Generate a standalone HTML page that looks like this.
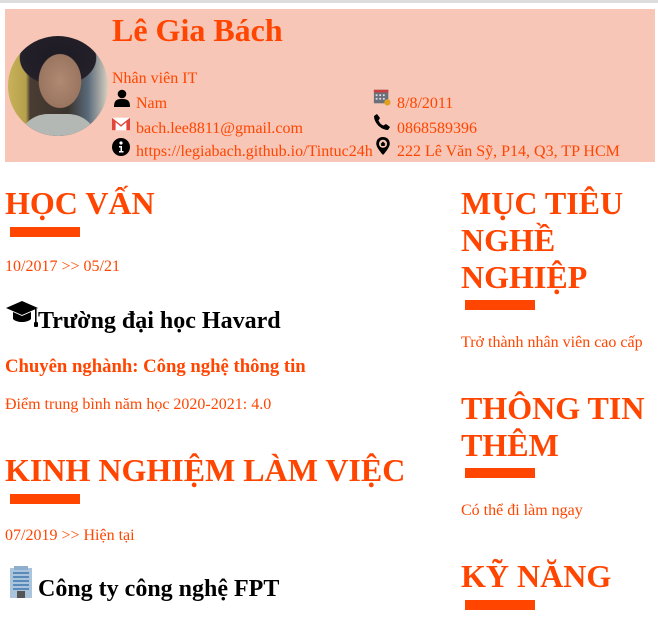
<!DOCTYPE html>
<html><head><meta charset="utf-8"><style>
*{margin:0;padding:0;box-sizing:border-box}
body{width:658px;height:626px;overflow:hidden;background:#fff;font-family:"Liberation Serif",serif;color:#ff4500;position:relative}
.a{position:absolute;white-space:nowrap}
.topline{position:absolute;left:0;top:0;width:658px;height:3px;background:#ddd}
.hdr{position:absolute;left:5px;top:9px;width:650px;height:153px;background:#f8c6b6}
.photo{position:absolute;left:8px;top:36px;width:100px;height:100px;border-radius:50%;overflow:hidden;background:radial-gradient(ellipse 30px 38px at 52% 45%,#b08a72 0%,#9a7560 70%,transparent 72%),radial-gradient(ellipse 42px 30px at 50% 22%,#1c1a22 0%,#24202a 90%,transparent 92%),linear-gradient(90deg,#c8b25a 0%,#b5a04c 18%,#4a3c32 22%,#3a342e 60%,#5a6a7a 80%,#d8d0c0 100%)}
.photo:after{content:"";position:absolute;left:10px;top:78px;width:80px;height:30px;border-radius:40px 40px 0 0;background:#b4b8b4}
.t15{font-size:16px;line-height:18px}
h2{position:absolute;font-size:32px;line-height:37px;font-weight:bold;color:#ff4500;white-space:nowrap}
.bar{position:absolute;width:70px;height:10px;background:#ff4500}
.ic{position:absolute;width:18px;height:18px}
</style></head><body>
<div class="topline"></div>
<div class="hdr"></div>
<div class="photo"></div>
<div class="a" style="left:112px;top:12px;font-size:32px;line-height:36px;font-weight:bold">Lê Gia Bách</div>
<div class="a t15" style="left:112px;top:70px">Nhân viên IT</div>

<svg class="ic" style="left:113px;top:89px" viewBox="0 0 18 18"><circle cx="9" cy="5" r="4.3" fill="#000"/><path d="M1 18 C1 11 4 10 9 10 C14 10 17 11 17 18Z" fill="#000"/></svg>
<div class="a t15" style="left:136px;top:95px">Nam</div>
<svg class="ic" style="left:112px;top:115px" viewBox="0 0 20 16"><rect x="0" y="1" width="20" height="14" fill="#fff"/><path d="M0 1 L10 9 L20 1 L20 15 L16 15 L16 6 L10 11 L4 6 L4 15 L0 15Z" fill="#e2463a"/></svg>
<div class="a t15" style="left:136px;top:120px">bach.lee8811@gmail.com</div>
<svg class="ic" style="left:112px;top:138px" viewBox="0 0 18 18"><circle cx="9" cy="9" r="9" fill="#000"/><circle cx="9" cy="5" r="1.6" fill="#fff"/><path d="M7 8h3v5h1.5v1.5h-4.5V13H8.5v-3.5H7z" fill="#fff"/></svg>
<div class="a t15" style="left:136px;top:143px">https://legiabach.github.io/Tintuc24h</div>

<svg class="ic" style="left:373px;top:88px" viewBox="0 0 20 20"><rect x="1" y="2" width="16" height="15" fill="#6a6f78"/><rect x="1" y="2" width="16" height="3" fill="#c84040"/><g fill="#dde"><rect x="3" y="7" width="2" height="2"/><rect x="7" y="7" width="2" height="2"/><rect x="11" y="7" width="2" height="2"/><rect x="3" y="11" width="2" height="2"/><rect x="7" y="11" width="2" height="2"/><rect x="11" y="11" width="2" height="2"/></g><circle cx="16" cy="16" r="3.5" fill="#e0a020"/></svg>
<div class="a t15" style="left:397px;top:95px">8/8/2011</div>
<svg class="ic" style="left:373px;top:113px" viewBox="0 0 18 18"><path d="M4 1 L7 5 L5.5 7.5 C7 10.5 8 11.5 10.5 12.5 L13 11 L17 14 L15 17 C8 17 1 10 1 3Z" fill="#000"/></svg>
<div class="a t15" style="left:397px;top:120px">0868589396</div>
<svg class="ic" style="left:374px;top:137px" viewBox="0 0 16 20"><path d="M8 0 C3.5 0 0.5 3 0.5 7.5 C0.5 12 8 20 8 20 C8 20 15.5 12 15.5 7.5 C15.5 3 12.5 0 8 0Z" fill="#000"/><circle cx="8" cy="7.5" r="4.5" fill="#f8c6b6"/><path d="M5 8 L8 5 L11 8 L10 8 L10 10 L6 10 L6 8Z" fill="#000"/></svg>
<div class="a t15" style="left:397px;top:143px">222 Lê Văn Sỹ, P14, Q3, TP HCM</div>

<h2 style="left:5px;top:185px">HỌC VẤN</h2>
<div class="bar" style="left:10px;top:227px"></div>
<div class="a t15" style="left:5px;top:258px">10/2017 &gt;&gt; 05/21</div>
<svg class="a" style="left:5px;top:299px" width="34" height="30" viewBox="0 0 34 30"><path d="M17 2 L33 9 L17 16 L1 9Z" fill="#000"/><path d="M8 13 L8 20 C12 24 22 24 26 20 L26 13 L17 17Z" fill="#000"/><rect x="30" y="10" width="1.6" height="14" fill="#000"/><rect x="29" y="23" width="4" height="5" rx="1" fill="#000"/></svg>
<div class="a" style="left:38px;top:308px;font-size:24px;line-height:27px;font-weight:bold;color:#000">Trường đại học Havard</div>
<div class="a" style="left:5px;top:356px;font-size:18.7px;line-height:21px;font-weight:bold">Chuyên nghành: Công nghệ thông tin</div>
<div class="a t15" style="left:5px;top:396px">Điểm trung bình năm học 2020-2021: 4.0</div>

<h2 style="left:5px;top:452px">KINH NGHIỆM LÀM VIỆC</h2>
<div class="bar" style="left:10px;top:494px"></div>
<div class="a t15" style="left:5px;top:527px">07/2019 &gt;&gt; Hiện tại</div>
<svg class="a" style="left:8px;top:566px" width="26" height="32" viewBox="0 0 26 32"><rect x="2" y="2" width="22" height="30" fill="#a9c4dc"/><rect x="6" y="0" width="14" height="4" fill="#8fb0cc"/><g fill="#5a8ab8"><rect x="5" y="6" width="16" height="2"/><rect x="5" y="10" width="16" height="2"/><rect x="5" y="14" width="16" height="2"/><rect x="5" y="18" width="16" height="2"/><rect x="5" y="22" width="16" height="2"/></g><rect x="9" y="25" width="8" height="7" fill="#555"/></svg>
<div class="a" style="left:38px;top:576px;font-size:24px;line-height:27px;font-weight:bold;color:#000">Công ty công nghệ FPT</div>

<h2 style="left:461px;top:185px">MỤC TIÊU<br>NGHỀ<br>NGHIỆP</h2>
<div class="bar" style="left:465px;top:300px"></div>
<div class="a t15" style="left:461px;top:334px">Trở thành nhân viên cao cấp</div>
<h2 style="left:461px;top:390px">THÔNG TIN<br>THÊM</h2>
<div class="bar" style="left:465px;top:468px"></div>
<div class="a t15" style="left:461px;top:502px">Có thể đi làm ngay</div>
<h2 style="left:461px;top:558px">KỸ NĂNG</h2>
<div class="bar" style="left:465px;top:600px"></div>
</body></html>
